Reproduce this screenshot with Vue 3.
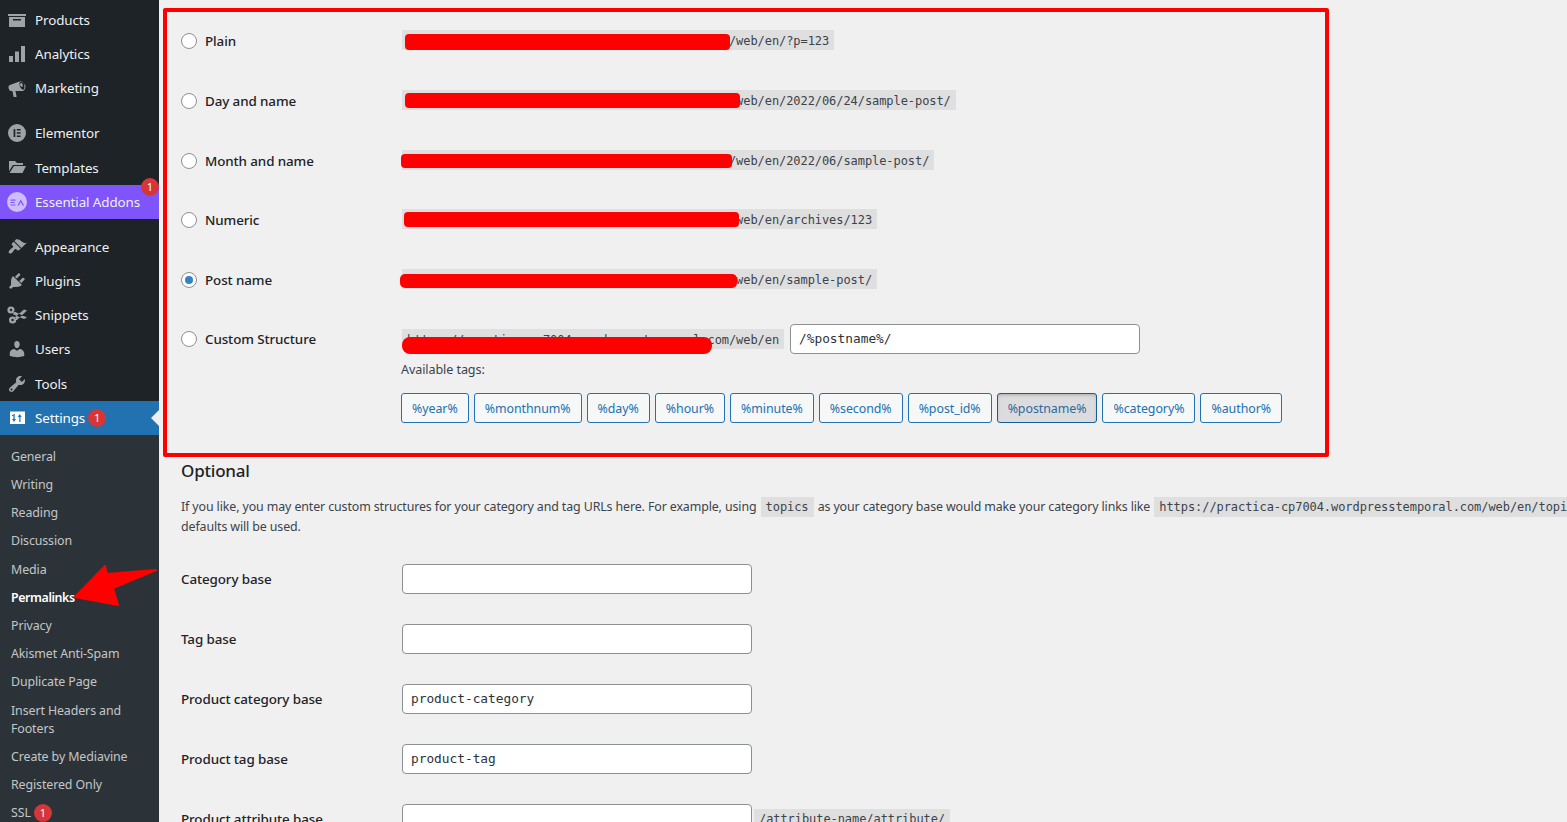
<script setup>
const circle = 'M1 10a9 9 0 1 0 18 0a9 9 0 1 0 -18 0z'
const icons = {
  products: 'M1 4h18v2H1zM2 7h16v10H2zM6 9v1.6h8V9z',
  analytics: 'M2 18v-6h4v6zM8 18V7.5h4V18zM14 18V2h4v16z',
  marketing: 'M18.15 5.94c.46 1.62.38 3.22-.02 4.48-.42 1.28-1.26 2.18-2.3 2.48-.16.06-.26.06-.4.06-.06.02-.12.02-.18.02-.06.02-.14.02-.22.02H8.4l1.2 5.5c.02.14-.06.26-.14.34-.08.1-.24.16-.34.16H6.95c-.1 0-.26-.06-.34-.16-.08-.08-.16-.2-.14-.34l-1-5.5H4.25c-.5.06-1.08-.18-1.54-.62s-.88-1.08-1.06-1.88c-.24-.8-.2-1.56-.02-2.2.2-.62.58-1.08 1.16-1.26l8.96-3.2c.14-.04.26-.06.42-.06 1.9-.5 5.1.9 5.98 3.66zm-.9 4.1c.3-.96.32-2.24-.06-3.52-.7-2.2-2.5-3.4-3.6-3-1.1.38-1.46 2.62-.66 4.9.8 2.2 2.66 3.6 3.76 3.2.3-.12.42-.3.56-.58zm-2.3-1.2c-.7.2-1.5-.5-1.8-1.5s0-2 .7-2.2 1.5.5 1.8 1.5 0 2-.7 2.2z',
  elementor: circle + 'M6.6 6h1.7v8H6.6zM9.8 6h3.8v1.6H9.8zM9.8 9.2h3.8v1.6H9.8zM9.8 12.4h3.8V14H9.8z',
  templates: 'M2 3h6l2 2h6v2H6L2 13zM7 8h12l-3.5 7H2.5z',
  ea: 'M0 10a10 10 0 1 0 20 0a10 10 0 1 0 -20 0zM3.5 7.6h5v1.1h-5zM3.5 10h4v1.1h-4zM3.5 12.4h5v1.1h-5zM13.8 7.4l3.4 6.2h-1.5l-1.9-3.6-1.9 3.6h-1.5z',
  appearance: 'M14.48 11.06L7.41 3.99l1.5-1.5c.5-.56 2.3-.47 3.51.32 1.21.8 1.43 1.28 2.91 2.1 1.18.64 2.45 1.26 4.45.85zm-.71.71L6.7 4.7 4.93 6.47c-.39.39-.39 1.02 0 1.41l1.06 1.06c.39.39.39 1.03 0 1.42-.6.6-1.43 1.11-2.21 1.69-.35.26-.7.53-1.01.84-1.43 1.43-1.4 2.52-.71 3.21.69.69 1.78.72 3.21-.71.31-.31.58-.66.84-1.01.58-.78 1.09-1.61 1.69-2.21.39-.39 1.03-.39 1.42 0l1.06 1.06c.39.39 1.02.39 1.41 0z',
  plugins: 'M13.11 4.36L9.87 7.6 8 5.73l3.24-3.24c.35-.34 1.05-.2 1.56.32.52.51.66 1.21.31 1.55zm-8 1.77l.91-1.12 9.01 9.01-1.19.84c-.71.71-2.63 1.16-3.82 1.16H6.14L4.9 17.26c-.59.59-1.54.59-2.12 0-.59-.58-.59-1.53 0-2.12l1.24-1.24v-3.88c0-1.13.4-3.19 1.09-3.89zm7.26 3.97l3.24-3.24c.34-.35 1.04-.21 1.55.31.52.51.66 1.21.31 1.55l-3.24 3.25z',
  snippets: 'M0.4 5a3.6 3.6 0 1 0 7.2 0a3.6 3.6 0 1 0 -7.2 0zM2.8 5a1.2 1.2 0 1 0 2.4 0a1.2 1.2 0 1 0 -2.4 0zM2 15a3.6 3.6 0 1 0 7.2 0a3.6 3.6 0 1 0 -7.2 0zM4.4 15a1.2 1.2 0 1 0 2.4 0a1.2 1.2 0 1 0 -2.4 0zM6.8 6.2L20 12.5l-3 1.6L6 9.2zM7.6 12.6L17 4.4l3 1.2-10 9.4z',
  users: 'M10 9.25c-2.27 0-2.73-3.44-2.73-3.44C7 4.02 7.82 2 9.97 2c2.16 0 2.98 2.02 2.71 3.81 0 0-.41 3.44-2.68 3.44zm0 2.57L12.72 10c2.39 0 4.52 2.33 4.52 4.53v2.49s-3.65 1.13-7.24 1.13c-3.65 0-7.24-1.13-7.24-1.13v-2.49c0-2.25 1.94-4.48 4.47-4.48z',
  tools: 'M16.68 9.77c-1.34 1.34-3.3 1.67-4.95.99l-5.41 6.52c-.99.99-2.59.99-3.58 0s-.99-2.59 0-3.57l6.52-5.42c-.68-1.65-.35-3.61.99-4.95 1.28-1.28 3.12-1.62 4.72-1.06l-2.89 2.89 2.82 2.82 2.86-2.87c.53 1.58.18 3.39-1.08 4.65zM3.81 16.21c.4.39 1.04.39 1.43 0 .4-.4.4-1.04 0-1.43-.39-.4-1.03-.4-1.43 0-.39.39-.39 1.03 0 1.43z',
  settings: 'M3 3.5h15v12.5H3zM6.4 6v5H5l2 3 2-3H7.7V6zM12.3 14V9h-1.6l2-3 2 3h-1.2v5zM5 7h1.2v1H5z'
}

const groupA = [
  { key: 'products', label: 'Products' },
  { key: 'analytics', label: 'Analytics' },
  { key: 'marketing', label: 'Marketing' }
]
const groupB = [
  { key: 'elementor', label: 'Elementor' },
  { key: 'templates', label: 'Templates' }
]
const groupC = [
  { key: 'appearance', label: 'Appearance' },
  { key: 'plugins', label: 'Plugins' },
  { key: 'snippets', label: 'Snippets' },
  { key: 'users', label: 'Users' },
  { key: 'tools', label: 'Tools' }
]
const submenu = ['General', 'Writing', 'Reading', 'Discussion', 'Media', 'Permalinks', 'Privacy', 'Akismet Anti-Spam', 'Duplicate Page', 'Insert Headers and Footers', 'Create by Mediavine', 'Registered Only']

const base = 'https://practica-cp7004.wordpresstemporal.com/web/en'
const options = [
  { label: 'Plain', url: base + '/?p=123' },
  { label: 'Day and name', url: base + '/2022/06/24/sample-post/' },
  { label: 'Month and name', url: base + '/2022/06/sample-post/' },
  { label: 'Numeric', url: base + '/archives/123' },
  { label: 'Post name', url: base + '/sample-post/', checked: true }
]
const tags = ['%year%', '%monthnum%', '%day%', '%hour%', '%minute%', '%second%', '%post_id%', '%postname%', '%category%', '%author%']
const optional = [
  { label: 'Category base', value: '' },
  { label: 'Tag base', value: '' },
  { label: 'Product category base', value: 'product-category' },
  { label: 'Product tag base', value: 'product-tag' }
]
const redactions = [
  { x: 405, y: 34, w: 325, h: 16, r: 4 },
  { x: 405, y: 93, w: 335, h: 15, r: 4 },
  { x: 401, y: 154, w: 331, h: 14, r: 4 },
  { x: 404, y: 212, w: 335, h: 15, r: 4 },
  { x: 400, y: 274, w: 337, h: 14, r: 5 },
  { x: 402, y: 337, w: 310, h: 17, r: 8 }
]
const barStyle = b => ({ left: b.x + 'px', top: b.y + 'px', width: b.w + 'px', height: b.h + 'px', borderRadius: b.r + 'px' })
</script>

<template>
  <div class="page">
    <aside class="sidebar">
      <a v-for="m in groupA" :key="m.key" class="item">
        <svg class="icon" viewBox="0 0 20 20"><path :d="icons[m.key]" /></svg>
        <span>{{ m.label }}</span>
      </a>
      <div class="sep"></div>
      <a v-for="m in groupB" :key="m.key" class="item">
        <svg class="icon" viewBox="0 0 20 20"><path :d="icons[m.key]" /></svg>
        <span>{{ m.label }}</span>
      </a>
      <a class="item ea">
        <svg class="icon" viewBox="0 0 20 20"><path :d="icons.ea" /></svg>
        <span>Essential Addons</span>
        <b class="badge badge-float">1</b>
      </a>
      <div class="sep"></div>
      <a v-for="m in groupC" :key="m.key" class="item">
        <svg class="icon" viewBox="0 0 20 20"><path :d="icons[m.key]" /></svg>
        <span>{{ m.label }}</span>
      </a>
      <a class="item current">
        <svg class="icon" viewBox="0 0 20 20"><path :d="icons.settings" /></svg>
        <span>Settings</span>
        <b class="badge badge-inline">1</b>
      </a>
      <nav class="submenu">
        <a v-for="s in submenu" :key="s" class="sub" :class="{ active: s === 'Permalinks' }">{{ s }}</a>
        <a class="sub">SSL<b class="badge badge-inline">1</b></a>
      </nav>
    </aside>

    <main class="main">
      <section class="choices">
        <div v-for="o in options" :key="o.label" class="choice">
          <label class="radio-label">
            <input type="radio" name="structure" :checked="o.checked" />
            <span>{{ o.label }}</span>
          </label>
          <code class="code code-row">{{ o.url }}</code>
        </div>
        <div class="custom">
          <label class="radio-label custom-label">
            <input type="radio" name="structure" />
            <span>Custom Structure</span>
          </label>
          <div class="custom-body">
            <div class="custom-line">
              <code class="code code-row">{{ base }}</code>
              <input class="field custom-field" type="text" value="/%postname%/" readonly />
            </div>
            <p class="tags-title">Available tags:</p>
            <div class="tags">
              <button v-for="t in tags" :key="t" class="tag" :class="{ pressed: t === '%postname%' }" type="button">{{ t }}</button>
            </div>
          </div>
        </div>
      </section>

      <h2 class="heading">Optional</h2>
      <p class="intro">If you like, you may enter custom structures for your category and tag URLs here. For example, using <code class="code">topics</code> as your category base would make your category links like <code class="code">{{ base }}/topics/uncategorized/</code>. If you leave these blank the<br />defaults will be used.</p>

      <section class="optional">
        <div v-for="o in optional" :key="o.label" class="opt-row">
          <span class="opt-label">{{ o.label }}</span>
          <input class="field" type="text" :value="o.value" readonly />
        </div>
        <div class="opt-row">
          <span class="opt-label">Product attribute base</span>
          <input class="field" type="text" value="" readonly />
          <code class="code attr-code">/attribute-name/attribute/</code>
        </div>
      </section>
    </main>

    <div class="frame"></div>
    <div v-for="(b, i) in redactions" :key="i" class="bar" :style="barStyle(b)"></div>
    <svg class="arrow" viewBox="0 0 90 50" width="90" height="50">
      <path d="M2 35L32 4 34 12 83 8 40 26 45 43z" />
    </svg>
  </div>
</template>

<style scoped>
.page {
  position: relative;
  display: flex;
  height: 822px;
  overflow: hidden;
  background: #f0f0f0;
  font-family: "Noto Sans", "Open Sans", sans-serif;
}
.sidebar {
  flex: 0 0 159px;
  width: 159px;
  padding-top: 2.7px;
  background: #1d2327;
  box-sizing: border-box;
}
.item {
  position: relative;
  display: flex;
  align-items: center;
  height: 34.2px;
  padding-left: 7px;
  font-size: 13.4px;
  letter-spacing: -0.1px;
  color: #f0f0f1;
  white-space: nowrap;
}
.icon {
  flex: none;
  width: 20px;
  height: 20px;
  margin-right: 8px;
  fill: #9ea3a8;
  fill-rule: evenodd;
}
.sep { height: 11px; }
.ea { background: #7f54fb; }
.ea .icon { fill: #cdbdfd; }
.current { background: #2271b1; color: #fff; }
.current .icon { fill: #fff; }
.current::after {
  content: "";
  position: absolute;
  right: 0;
  top: 50%;
  margin-top: -8px;
  border: 8px solid transparent;
  border-right-color: #f0f0f0;
  border-left-width: 0;
}
.badge {
  display: inline-flex;
  align-items: center;
  justify-content: center;
  width: 18px;
  height: 18px;
  border-radius: 50%;
  background: #d63638;
  color: #fff;
  font-size: 11px;
  font-weight: 400;
  letter-spacing: 0;
}
.badge-inline { margin-left: 3px; }
.badge-float { position: absolute; left: 141px; top: -7px; }
.submenu {
  padding-top: 7.8px;
  background: #2c3338;
  min-height: 400px;
}
.sub {
  display: flex;
  align-items: center;
  padding: 5px 8px 5px 11px;
  font-size: 12.4px;
  line-height: 18.2px;
  letter-spacing: -0.1px;
  color: #c3c6c9;
}
.sub.active { color: #fff; font-weight: 600; letter-spacing: -0.4px; }

.main {
  flex: 1;
  min-width: 0;
  padding-left: 22px;
  color: #1d2327;
}
.choices { padding-top: 10.3px; }
.choice {
  display: flex;
  align-items: center;
  height: 59.7px;
}
.radio-label {
  flex: 0 0 220px;
  display: flex;
  align-items: center;
  gap: 8px;
  padding-top: 2px;
  box-sizing: border-box;
  font-size: 13.4px;
  font-weight: 500;
  letter-spacing: -0.1px;
  color: #1d2327;
}
.radio-label input {
  appearance: none;
  flex: none;
  position: relative;
  width: 16px;
  height: 16px;
  margin: 0;
  border: 1px solid #8c8f94;
  border-radius: 50%;
  background: #fff;
}
.radio-label input:checked::before {
  content: "";
  position: absolute;
  left: 3px;
  top: 3px;
  width: 8px;
  height: 8px;
  border-radius: 50%;
  background: #3582c4;
}
.code {
  display: inline-block;
  padding: 3px 5px;
  margin-left: 1px;
  background: #dfdfdf;
  font-family: "DejaVu Sans Mono", "Liberation Mono", monospace;
  font-size: 12px;
  line-height: 14px;
  letter-spacing: -0.07px;
  color: #3c434a;
  white-space: nowrap;
}
.code-row { padding: 4px 5px 2px; }
.custom { display: flex; }
.custom-label { height: 59.7px; padding-top: 0; }
.custom-body { padding-top: 14.85px; }
.custom-line {
  display: flex;
  align-items: center;
  height: 30px;
}
.field {
  box-sizing: border-box;
  width: 350px;
  height: 30px;
  padding: 0 8px;
  border: 1px solid #8c8f94;
  border-radius: 4px;
  background: #fff;
  font-family: "DejaVu Sans Mono", "Liberation Mono", monospace;
  font-size: 12.8px;
  color: #2c3338;
  outline: none;
}
.custom-field { margin-left: 6px; }
.tags-title {
  margin: 6px 0 13px;
  font-size: 12.6px;
  line-height: 20px;
  letter-spacing: -0.1px;
  color: #3c434a;
}
.tags { display: flex; gap: 5px; }
.tag {
  height: 30px;
  padding: 2px 10px 0;
  border: 1px solid #2271b1;
  border-radius: 3px;
  background: #f6f7f7;
  color: #2271b1;
  font-family: inherit;
  font-size: 12.4px;
  letter-spacing: -0.05px;
  white-space: nowrap;
}
.tag.pressed {
  background: #dcdcde;
  border-color: #135e96;
  color: #2c6a9e;
  box-shadow: inset 0 2px 5px -3px rgba(0, 0, 0, .5);
}
.heading {
  margin: 36px 0 14px;
  font-size: 17px;
  line-height: 24px;
  font-weight: 500;
  letter-spacing: -0.2px;
  color: #1d2327;
}
.intro {
  margin: 0;
  font-size: 12.4px;
  line-height: 20px;
  letter-spacing: -0.11px;
  color: #3c434a;
  white-space: nowrap;
}
.intro .code { margin: 0 1px; letter-spacing: -0.07px; }
.optional { padding-top: 12px; }
.opt-row {
  display: flex;
  align-items: center;
  height: 60px;
}
.opt-label {
  flex: 0 0 221px;
  font-size: 13.4px;
  font-weight: 500;
  letter-spacing: -0.1px;
}
.attr-code { margin-left: 2px; }

.frame {
  position: absolute;
  left: 163px;
  top: 8px;
  width: 1166px;
  height: 449px;
  box-sizing: border-box;
  border: 4px solid #ff0000;
  border-radius: 2px;
}
.bar {
  position: absolute;
  background: #ff0000;
}
.arrow {
  position: absolute;
  left: 73px;
  top: 562px;
  fill: #ff0000;
  stroke: #ff0000;
  stroke-width: 2;
  stroke-linejoin: round;
}
</style>

<style>
html, body { margin: 0; background: #f0f0f0; }
</style>
